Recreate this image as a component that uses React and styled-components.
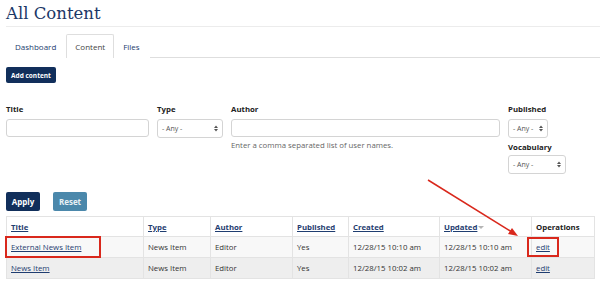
import React from 'react';
import styled, { createGlobalStyle } from 'styled-components';

const GlobalStyle = createGlobalStyle`
    html, body {
        margin: 0;
        padding: 0;
        background: #fff;
    }
    body {
        font-family: 'Open Sans', 'Liberation Sans', sans-serif;
        color: #333;
    }
`;

const Page = styled.div`
    position: relative;
    width: 600px;
    height: 281px;
    overflow: hidden;
    padding: 0 6px;
    box-sizing: border-box;
`;

const Heading = styled.h1`
    margin: 0;
    padding-top: 2px;
    font-family: 'DejaVu Serif', 'Liberation Serif', serif;
    font-weight: normal;
    font-size: 16.5px;
    line-height: 24px;
    color: #1b3767;
    border-bottom: 1px solid #ececec;
    margin-right: -6px;
`;

const Tabs = styled.ul`
    display: flex;
    list-style: none;
    margin: 7px -6px 0 0;
    padding: 0;
    border-bottom: 1px solid #dedede;
`;

const Tab = styled.li`
    height: 23px;
    line-height: 23px;
    padding: 0 ${(p) => (p.$active ? '8px' : '9px')} 0 8px;
    font-size: 8px;
    color: ${(p) => (p.$active ? '#444' : '#1d3c6e')};
    border: 1px solid ${(p) => (p.$active ? '#dedede' : 'transparent')};
    border-bottom: none;
    background: #fff;
    margin-bottom: -1px;
    border-radius: 2px 2px 0 0;
`;

const Button = styled.button`
    display: inline-flex;
    align-items: center;
    justify-content: center;
    font-family: 'Open Sans', sans-serif;
    font-weight: bold;
    color: ${(p) => (p.$variant === 'reset' ? '#e8f0f5' : '#fff')};
    border: none;
    border-radius: 2px;
    background: ${(p) => (p.$variant === 'reset' ? '#4b88ab' : '#112f5b')};
    height: ${(p) => (p.$small ? '16px' : '19px')};
    width: ${(p) => p.$width}px;
    font-size: ${(p) => (p.$small ? '6.5px' : '8px')};
    padding: 0;
    cursor: pointer;
`;

const AddRow = styled.div`
    margin-top: 9px;
    display: flex;
`;

const Filters = styled.div`
    display: flex;
    gap: 8px;
    margin-top: 21px;
`;

const Field = styled.div`
    display: flex;
    flex-direction: column;
    width: ${(p) => p.$width}px;
`;

const FieldColumn = styled.div`
    display: flex;
    flex-direction: column;
`;

const Label = styled.label`
    font-size: 7.8px;
    font-weight: bold;
    color: #222;
    line-height: 10px;
    margin-top: ${(p) => p.$top || 0}px;
`;

const Input = styled.div`
    margin-top: 5px;
    height: 18px;
    box-sizing: border-box;
    border: 1px solid #d4d4d4;
    border-radius: 3px;
    background: #fff;
`;

const Select = styled.div`
    margin-top: ${(p) => p.$top ?? 5}px;
    height: 19px;
    width: ${(p) => (p.$width ? `${p.$width}px` : 'auto')};
    box-sizing: border-box;
    border: 1px solid #d4d4d4;
    border-radius: 3px;
    background: #fff;
    display: flex;
    align-items: center;
    justify-content: space-between;
    padding: 0 4px 0 4px;
    font-size: 7px;
    color: #555;
`;

const Help = styled.div`
    margin-top: 3px;
    font-size: 7.8px;
    line-height: 10px;
    color: #666;
`;

const Actions = styled.div`
    display: flex;
    gap: 13px;
    margin-top: 18px;
`;

const Table = styled.table`
    margin-top: 5px;
    width: 588px;
    border-collapse: collapse;
    table-layout: fixed;
    font-size: 7.8px;
`;

const Th = styled.th`
    text-align: left;
    height: 19px;
    padding: 0 4px;
    border: 1px solid #e3e3e3;
    background: #fff;
    font-weight: bold;
    color: #222;
`;

const Td = styled.td`
    height: 20px;
    padding: 0 4px;
    border: 1px solid #e3e3e3;
    white-space: nowrap;
    color: #333;
`;

const Row = styled.tr`
    background: ${(p) => (p.$alt ? '#eeeeee' : '#f8f8f8')};
`;

const Link = styled.a`
    color: #1f3d70;
    text-decoration: underline;
    font-weight: ${(p) => (p.$bold ? 'bold' : 'normal')};
`;

const SortMark = styled.span`
    display: inline-block;
    margin-left: 1px;
    width: 0;
    height: 0;
    border-left: 3px solid transparent;
    border-right: 3px solid transparent;
    border-top: 3px solid #b5b5b5;
    vertical-align: middle;
`;

const Callout = styled.div`
    position: absolute;
    left: ${(p) => p.$x}px;
    top: ${(p) => p.$y}px;
    width: ${(p) => p.$w}px;
    height: ${(p) => p.$h}px;
    box-sizing: border-box;
    border: 2px solid #d9281c;
    pointer-events: none;
`;

const ArrowLayer = styled.svg`
    position: absolute;
    left: 0;
    top: 0;
    pointer-events: none;
`;

const Updown = () => (
    <svg width="4" height="7" viewBox="0 0 4 7">
        <path d="M0 3 L2 0.5 L4 3 Z M0 4 L2 6.5 L4 4 Z" fill="#555" />
    </svg>
);

const columns = [
    { label: 'Title', width: 137, link: true },
    { label: 'Type', width: 67, link: true },
    { label: 'Author', width: 82, link: true },
    { label: 'Published', width: 56, link: true },
    { label: 'Created', width: 91, link: true },
    { label: 'Updated', width: 92, link: true, sorted: true },
    { label: 'Operations', width: 63 },
];

const rows = [
    ['External News Item', 'News Item', 'Editor', 'Yes', '12/28/15 10:10 am', '12/28/15 10:10 am'],
    ['News Item', 'News Item', 'Editor', 'Yes', '12/28/15 10:02 am', '12/28/15 10:02 am'],
];

const App = () => (
    <Page>
        <GlobalStyle />
        <Heading>All Content</Heading>
        <Tabs>
            <Tab>Dashboard</Tab>
            <Tab $active>Content</Tab>
            <Tab>Files</Tab>
        </Tabs>
        <AddRow>
            <Button $small $width={50}>Add content</Button>
        </AddRow>
        <Filters>
            <Field $width={143}>
                <Label>Title</Label>
                <Input />
            </Field>
            <Field $width={66}>
                <Label>Type</Label>
                <Select>
                    <span>- Any -</span>
                    <Updown />
                </Select>
            </Field>
            <Field $width={269}>
                <Label>Author</Label>
                <Input />
                <Help>Enter a comma separated list of user names.</Help>
            </Field>
            <FieldColumn>
                <Label>Published</Label>
                <Select $width={40}>
                    <span>- Any -</span>
                    <Updown />
                </Select>
                <Label $top={4}>Vocabulary</Label>
                <Select $width={58} $top={3}>
                    <span>- Any -</span>
                    <Updown />
                </Select>
            </FieldColumn>
        </Filters>
        <Actions>
            <Button $width={34}>Apply</Button>
            <Button $variant="reset" $width={34}>Reset</Button>
        </Actions>
        <Table>
            <colgroup>
                {columns.map((c) => (
                    <col key={c.label} style={{ width: c.width }} />
                ))}
            </colgroup>
            <thead>
                <tr>
                    {columns.map((c) => (
                        <Th key={c.label}>
                            {c.link ? <Link $bold>{c.label}</Link> : c.label}
                            {c.sorted && <SortMark />}
                        </Th>
                    ))}
                </tr>
            </thead>
            <tbody>
                {rows.map((r, i) => (
                    <Row key={r[0]} $alt={i % 2 === 1}>
                        <Td>
                            <Link>{r[0]}</Link>
                        </Td>
                        {r.slice(1).map((v, j) => (
                            <Td key={j}>{v}</Td>
                        ))}
                        <Td>
                            <Link>edit</Link>
                        </Td>
                    </Row>
                ))}
            </tbody>
        </Table>

        <Callout $x={5} $y={236} $w={96} $h={22} />
        <Callout $x={527} $y={237} $w={32} $h={20} />
        <ArrowLayer width="600" height="281">
            <line x1="428" y1="180" x2="512" y2="232" stroke="#d9281c" strokeWidth="1.5" />
            <path d="M518 236 L508 234 L512 228 Z" fill="#d9281c" />
        </ArrowLayer>
    </Page>
);

export default App;
